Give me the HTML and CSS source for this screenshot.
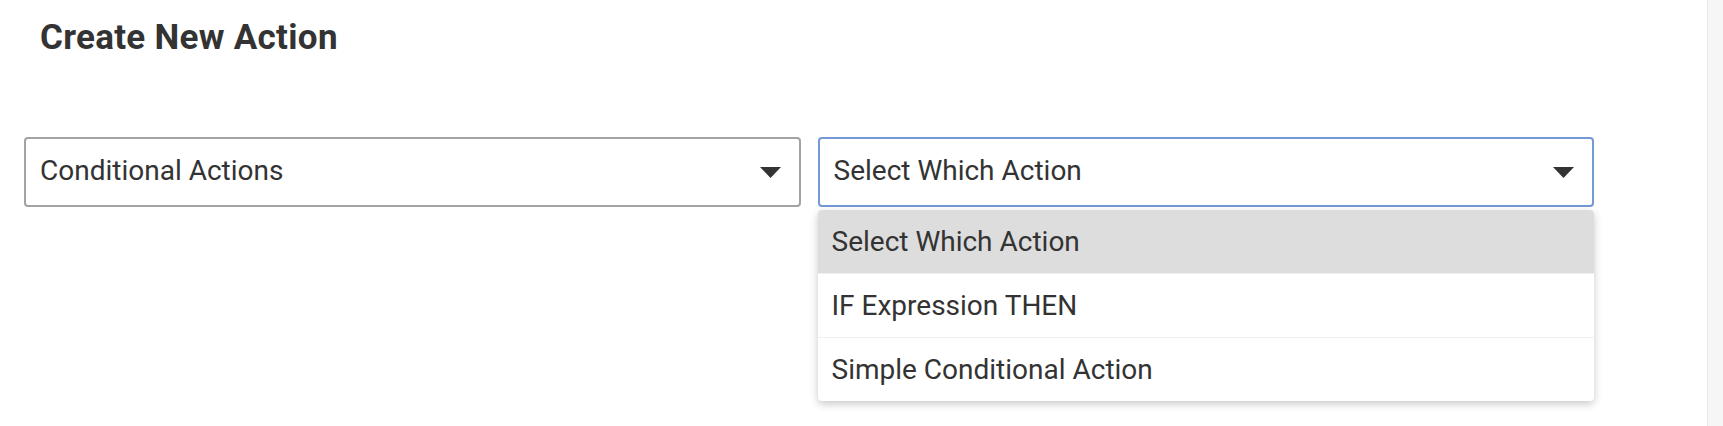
FILE: index.html
```html
<!DOCTYPE html>
<html lang="en">
  <head>
    <meta charset="UTF-8" />
    <meta name="viewport" content="width=device-width, initial-scale=1.0" />
    <title>Create New Action</title>
    <link rel="stylesheet" href="styles.css">
  </head>
  <body>
    <div class="page">
      <main class="panel">
        <h1 class="panel-title">Create New Action</h1>
        <div class="picker-row">
          <div class="picker">
            <span class="picker-value">Conditional Actions</span>
            <svg class="picker-caret" viewBox="0 0 21 11" width="21" height="11">
              <polygon points="0,0 21,0 10.5,11" />
            </svg>
          </div>
          <div class="picker picker-open">
            <span class="picker-value">Select Which Action</span>
            <svg class="picker-caret" viewBox="0 0 21 11" width="21" height="11">
              <polygon points="0,0 21,0 10.5,11" />
            </svg>
            <ul class="picker-menu">
              <li class="picker-option selected">Select Which Action</li>
              <li class="picker-option">IF Expression THEN</li>
              <li class="picker-option">Simple Conditional Action</li>
            </ul>
          </div>
        </div>
      </main>
      <div class="scroll-track"></div>
    </div>
  </body>
</html>
```

FILE: styles.css
```css
body {
  margin: 0;
  font-family: Roboto, "Liberation Sans", sans-serif;
  color: #333;
  background: #fff;
}
.page {
  display: flex;
  height: 426px;
  overflow: hidden;
}
.panel {
  flex: 1;
  padding: 17px 0 0 24px;
}
.panel-title {
  margin: 0 0 0 16px;
  font-size: 35px;
  line-height: 41px;
  font-weight: 700;
  letter-spacing: 0.3px;
  color: #333;
}
.picker-row {
  display: flex;
  gap: 17px;
  width: 1570px;
  margin-top: 79px;
}
.picker {
  position: relative;
  flex: 1;
  box-sizing: border-box;
  height: 70px;
  display: flex;
  align-items: center;
  justify-content: space-between;
  padding: 0 18px 0 14px;
  border: 2px solid #a3a3a3;
  border-radius: 4px;
  font-size: 28px;
}
.picker-value {
  margin-bottom: 4px;
}
.picker-open {
  border-color: #7598d6;
}
.picker-caret {
  fill: #333;
}
.picker-menu {
  position: absolute;
  top: 71px;
  left: -2px;
  right: -2px;
  margin: 0;
  padding: 0;
  list-style: none;
  background: #fff;
  border-radius: 4px;
  overflow: hidden;
  box-shadow: 0 3px 9px rgba(0, 0, 0, 0.22);
}
.picker-option {
  height: 63px;
  display: flex;
  align-items: center;
  padding-left: 14px;
  border-bottom: 1px solid #efefef;
}
.picker-option:last-child {
  border-bottom: none;
}
.picker-option.selected {
  background: #ddd;
}
.scroll-track {
  width: 15px;
  background: #f6f6f6;
  border-left: 1px solid #e8e8e8;
}
```
